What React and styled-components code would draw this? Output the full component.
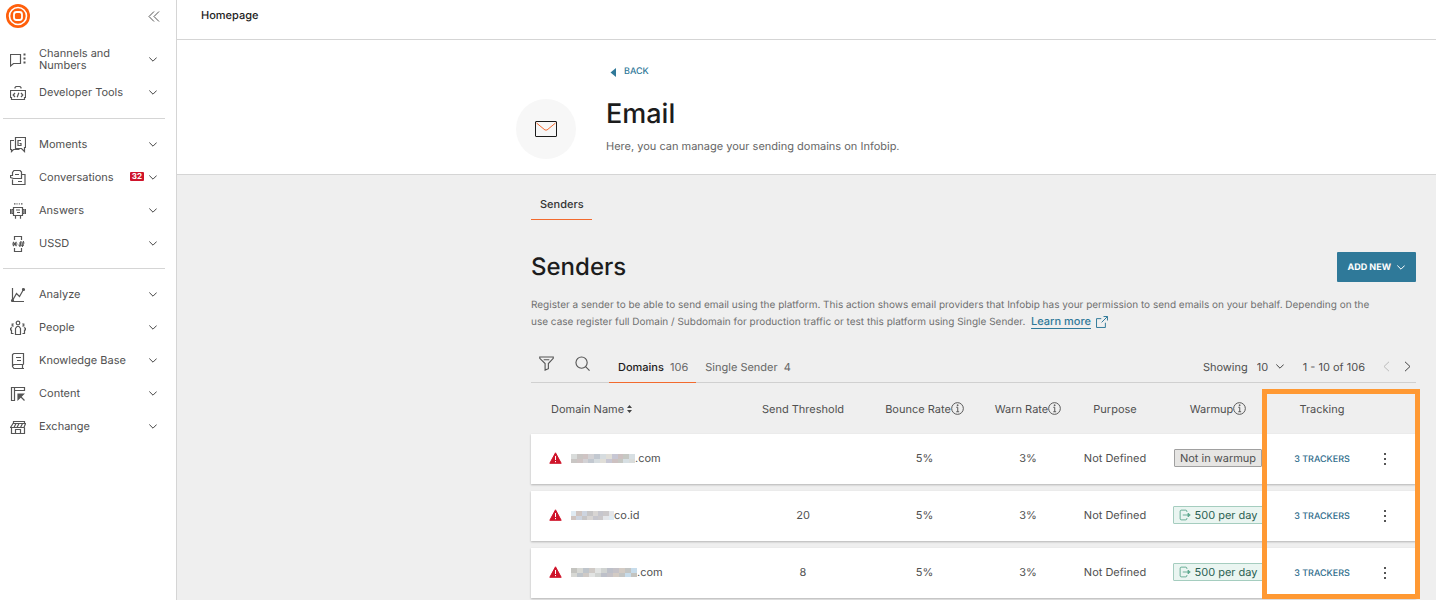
import React from "react";
import styled, { createGlobalStyle } from "styled-components";

const GlobalStyle = createGlobalStyle`
  * {
    box-sizing: border-box;
  }
  body {
    margin: 0;
    background: #efefef;
    color: #505050;
    font-family: Inter, "Liberation Sans", sans-serif;
    font-size: 11px;
    line-height: 16px;
    text-rendering: geometricPrecision;
  }
  button,
  select {
    font-family: inherit;
    font-size: inherit;
    font-weight: inherit;
    color: inherit;
    text-rendering: inherit;
    background: none;
    border: 0;
    padding: 0;
    margin: 0;
    cursor: pointer;
  }
  h1,
  h2,
  p {
    margin: 0;
  }
  svg {
    display: block;
    flex: none;
  }
`;

const Page = styled.div`
  display: flex;
  min-height: 100vh;
`;

/* sidebar */
const Sidebar = styled.aside`
  flex: none;
  width: 177px;
  background: #fff;
  border-right: 1px solid #d5d5d5;
`;
const SidebarTop = styled.div`
  display: flex;
  align-items: center;
  justify-content: space-between;
  height: 32px;
  margin-bottom: 10px;
  padding: 0 16px 0 6px;
`;
const NavGroup = styled.nav`
  display: flex;
  flex-direction: column;
  & + & {
    margin-top: 10px;
  }
  & + & + & {
    margin-top: 9px;
  }
  & + &::before {
    content: "";
    height: 1px;
    margin: 0 11px 8px 3px;
    background: #d5d5d5;
  }
`;
const NavItem = styled.button`
  display: flex;
  align-items: center;
  height: 33px;
  padding: 0 19px 0 10px;
  text-align: left;
  line-height: 12px;
  svg {
    margin-top: 2px;
  }
`;
const NavLabel = styled.span`
  flex: 1;
  margin-left: 13px;
  padding-right: ${(props) => (props.$wrap ? "24px" : "0")};
`;
const Count = styled.span`
  margin-right: 5px;
  padding: 0 2px;
  border-radius: 1px;
  background: #cf142b;
  color: #fff;
  font-size: 8px;
  font-weight: 700;
  line-height: 9px;
`;

/* main area */
const Main = styled.main`
  flex: 1;
  min-width: 0;
`;
const TopBar = styled.header`
  height: 40px;
  padding: 7px 24px;
  background: #fff;
  border-bottom: 1px solid #d5d5d5;
  color: #1c1c1c;
  font-weight: 500;
`;
const Hero = styled.section`
  display: flex;
  gap: 30px;
  height: 135px;
  padding: 24px 20px 0 339px;
  background: #fff;
  border-bottom: 1px solid #d5d5d5;
`;
const HeroIcon = styled.div`
  display: flex;
  align-items: center;
  justify-content: center;
  width: 60px;
  height: 60px;
  margin-top: 35px;
  border-radius: 50%;
  background: #f7f7f7;
`;
const BackLink = styled.a`
  display: flex;
  align-items: center;
  gap: 8px;
  padding-left: 4px;
  color: #2f7999;
  font-size: 9px;
  font-weight: 500;
  text-decoration: none;
`;
const Title = styled.h1`
  margin: 17px 0 7px;
  color: #1c1c1c;
  font-size: 27px;
  font-weight: 500;
  line-height: 34px;
`;
const Muted = styled.p`
  color: #666;
`;
const Content = styled.section`
  padding: 17px 20px 0 354px;
`;
const PageTab = styled.button`
  height: 28px;
  padding: 0 8px 4px 9px;
  border-bottom: 1px solid #f26a2e;
  color: #333;
  font-weight: 500;
`;
const SectionHead = styled.div`
  display: flex;
  align-items: center;
  justify-content: space-between;
  margin: 32px 0 15px;
`;
const SectionTitle = styled.h2`
  color: #1c1c1c;
  font-size: 24px;
  font-weight: 500;
  line-height: 30px;
`;
const AddButton = styled.button`
  display: flex;
  align-items: center;
  gap: 6px;
  height: 30px;
  padding: 0 11px 0 10px;
  border-radius: 1px;
  background: #2f7999;
  color: #fff;
  font-size: 9px;
  font-weight: 700;
`;
const Description = styled.p`
  color: #707070;
  font-size: 10px;
`;
const LearnMore = styled.a`
  margin-left: 3px;
  color: #2f7999;
  font-size: 11px;
  font-weight: 500;
  text-decoration: underline;
  text-underline-offset: 3px;
  svg {
    display: inline-block;
    margin-left: 5px;
    vertical-align: -3px;
  }
`;

/* toolbar above the table */
const Toolbar = styled.div`
  display: flex;
  align-items: stretch;
  height: 32px;
  margin-top: 21px;
  border-bottom: 1px solid #d0d0d0;
`;
const Tools = styled.div`
  display: flex;
  align-items: center;
  gap: 16px;
  padding: 0 17px 6px 5px;
`;
const ToolButton = styled.button`
  display: flex;
  justify-content: center;
  width: 20px;
`;
const ListTab = styled.button`
  margin-bottom: -1px;
  padding: 0 8px 0 9px;
  border-bottom: 1px solid ${(props) => (props.$active ? "#f26a2e" : "transparent")};
  color: #666;
  strong {
    margin-right: 3px;
    color: ${(props) => (props.$active ? "#1c1c1c" : "inherit")};
    font-weight: ${(props) => (props.$active ? 500 : "inherit")};
  }
`;
const Pager = styled.div`
  display: flex;
  align-items: center;
  margin-left: auto;
  padding-right: 5px;
`;
const SelectBox = styled.label`
  display: flex;
  align-items: center;
  gap: 9px;
  margin-right: 19px;
`;
const PageSize = styled.select`
  appearance: none;
  width: 28px;
  height: 16px;
  margin-right: -18px;
  outline: none;
`;
const PagerButton = styled.button`
  margin-left: ${(props) => (props.$prev ? "18px" : "14px")};
  color: ${(props) => (props.$prev ? "#bbb" : "#444")};
`;

/* domain table */
const TableWrap = styled.div`
  display: flow-root;
  position: relative;
`;
const Table = styled.table`
  width: 100%;
  margin-bottom: -7px;
  table-layout: fixed;
  border-collapse: separate;
  border-spacing: 0 7px;
`;
const Col = styled.col`
  width: ${(props) => props.$width || "auto"};
`;
const HeadCell = styled.th`
  height: 37px;
  padding: 0;
  padding-left: ${(props) => (props.$left ? "20px" : "0")};
  font-weight: 400;
  text-align: left;
`;
const Row = styled.tr`
  background: #fff;
  box-shadow: 0 1px 2px rgba(0, 0, 0, 0.25);
`;
const Cell = styled.td`
  height: 50px;
  padding: 0 0 2px;
`;
const Center = styled.div`
  display: flex;
  align-items: center;
  justify-content: ${(props) => (props.$left ? "flex-start" : "center")};
  gap: ${(props) => (props.$gap ? "3px" : "0")};
`;
const MenuCell = styled(Cell)`
  padding: 0 12px 0 0;
`;
const DomainName = styled.div`
  display: flex;
  align-items: center;
  gap: 9px;
  padding-left: 18px;
`;
const Masked = styled.span`
  display: flex;
  align-items: center;
`;
const Tag = styled.span`
  display: inline-flex;
  align-items: center;
  gap: 4px;
  height: 18px;
  padding: 0 5px;
  border: 1px solid ${(props) => (props.$green ? "#a5cdbf" : "#a0a0a0")};
  border-radius: 1px;
  background: ${(props) => (props.$green ? "#eaf5f1" : "#e6e5e3")};
  color: ${(props) => (props.$green ? "#2b6152" : "#505050")};
`;
const TrackerButton = styled.button`
  padding-top: 2px;
  color: #2f6d8c;
  font-size: 9px;
  font-weight: 500;
`;
const Highlight = styled.div`
  position: absolute;
  top: 6px;
  right: -4px;
  bottom: -1px;
  width: 158px;
  border: 5px solid #ff9933;
  pointer-events: none;
`;

/* icons */
const Icon = ({ size = 16, children, ...rest }) => (
  <svg
    width={size}
    height={size}
    viewBox="0 0 16 16"
    fill="none"
    stroke="#555"
    strokeWidth="1.2"
    aria-hidden="true"
    {...rest}
  >
    {children}
  </svg>
);

const Chevron = ({ color = "#444" }) => (
  <svg width="8" height="5" viewBox="0 0 8 5" fill="none" stroke={color} aria-hidden="true">
    <path d="M.3.5 4 4.2 7.7.5" />
  </svg>
);

const icons = {
  channels: (
    <>
      <path d="M.5 2.5h10v9h-7l-3 2.500z" />
      <path d="M13.500 2.500h2M13.500 6.500h2M13.500 10.500h2" strokeWidth="2" />
    </>
  ),
  tools: (
    <>
      <path d="M.5 5.500h15v7h-1v2h-13v-2h-1zM5 3.500v-1l1-1h4l1 1v1" />
      <path d="M5 8 3.200 10 5 12M11 8l1.800 2L11 12M8.800 7.800 7.200 12.200" />
    </>
  ),
  moments: (
    <path d="M4 3.500H.5v9h1v2l2-2h6M5.500.5h10v10h-1v4l-3-3h-6zM11 3.500H8v5h3v-2H9.500" />
  ),
  conversations: (
    <path d="M.5 5.500h2v-3l1.500-2h6l1.500 1.500v6.500h-8l-3-1zM5 4.500h4M2.500 9.500v5h12.500v-10h-3.500M8 11.500h4" />
  ),
  answers: (
    <path d="M3.500 4.500h9v8h-9zM.5 6v5M3.500 6.500h-1.500v4h1.500M15.500 6v5M12.500 6.500h1.500v4h-1.500M4 .8h1.500M6.500 .8h1M8.800 .8h1M11 .8h1.500M5.500 12.500v3.200M10.500 12.500v3.200M6 7h4M7 9.500h3" />
  ),
  ussd: (
    <path d="M4.500 4V.5h7V4M4.500 12v3.500h7V12M2 8h5.500M3 5.800l3.500 4.400M6.500 5.800 3 10.200M9 7h5.500M8.500 9.200h5.500M11 5 9.800 11M13.500 5l-1.200 6" />
  ),
  analyze: (
    <>
      <path d="M2.500 1v13.500H14M2.500 13.500l4-7 3 3 4-7" />
      <circle cx="13.500" cy="2.500" r="1" fill="#555" />
      <circle cx="2.500" cy="13.500" r="1" fill="#555" />
    </>
  ),
  people: (
    <>
      <circle cx="8" cy="3" r="1.800" />
      <path d="M5.500 14.500V8.500L7 6.500h2l1.500 2v6zM3.800 4h-1.600v2h1.600M12.200 4h1.600v2h-1.600M3.500 13.500h-2v-3.500h-1V8.500L2 7.500M12.500 13.500h2v-3.500h1V8.500L14 7.500" />
    </>
  ),
  knowledge: (
    <path d="M13.500 11.500v-11h-9.500l-1.500 1v12l1.500 2h10M13.500 11.500H4l-1.500 1.200M12.500 11.500v4M6 4.500h5M7 7.500h4" />
  ),
  content: (
    <>
      <path d="M1.500 1.500h3v13h-3zM4.500 4.500v-3h10v3zM14.500 14.500l-4-4" />
      <path d="M8 8h5.500L8 13.500z" fill="#555" />
    </>
  ),
  exchange: (
    <path d="M3.500 4.500v-2h11v2M3 4.500h12.500L14 8.500H.5zM6 4.500l-2 4M9 4.500l-2 4M12.500 4.500l-2 4M1.500 8.500v6h13v-6M5.500 14.500v-4h5v4" />
  ),
};

const navGroups = [
  [
    { label: "Channels and Numbers", icon: "channels", wrap: true },
    { label: "Developer Tools", icon: "tools" },
  ],
  [
    { label: "Moments", icon: "moments" },
    { label: "Conversations", icon: "conversations", count: 32 },
    { label: "Answers", icon: "answers" },
    { label: "USSD", icon: "ussd" },
  ],
  [
    { label: "Analyze", icon: "analyze" },
    { label: "People", icon: "people" },
    { label: "Knowledge Base", icon: "knowledge" },
    { label: "Content", icon: "content" },
    { label: "Exchange", icon: "exchange" },
  ],
];

// the start of each domain is masked: one list of colours per mosaic
const domains = [
  {
    mask: ["#d9dcdb", "#c9c6c4", "#cfc4c4", "#d3d2d5", "#c2c8d0", "#d6dcdf", "#e0ded8", "#c7c7d4", "#cdc1c1", "#c6c8c3", "#d7dfe3"],
    maskWidth: 64,
    suffix: ".com",
    threshold: "",
  },
  {
    mask: ["#dfeaf2", "#cfc4c0", "#cdd4df", "#c6c5c6", "#d8d5d3", "#c6c6cd", "#cbc8ca", "#e4e6ea"],
    maskWidth: 43,
    suffix: "co.id",
    threshold: "20",
    warmup: "500 per day",
  },
  {
    mask: ["#c4c4c0", "#d7d8d4", "#bfc5cb", "#cfcac6", "#e1e3e2", "#d0d3d1", "#bdc0c9", "#c5c2c7", "#d3cbc4", "#c3c5c4", "#c7dceb"],
    maskWidth: 66,
    suffix: ".com",
    threshold: "8",
    warmup: "500 per day",
  },
];

const Mosaic = ({ colors, width }) => (
  <svg
    width={width}
    height="9"
    viewBox={`0 0 ${colors.length * 2} 2`}
    preserveAspectRatio="none"
    shapeRendering="crispEdges"
    aria-hidden="true"
  >
    {colors.map((color, i) => (
      <g key={i}>
        <rect x={i * 2} y="0" width="2" height="1" fill={color} />
        <rect x={i * 2} y="1" width="2" height="1" fill={colors[(i + 1) % colors.length]} />
      </g>
    ))}
  </svg>
);

const InfoIcon = () => (
  <Icon size={13}>
    <circle cx="8" cy="8" r="7.200" />
    <path d="M6.500 6.500H8.300V12M6.500 12h3.500M7.700 3.500h1v1h-1z" />
  </Icon>
);

const WarningIcon = () => (
  <svg width="13" height="12" viewBox="0 0 13 12" aria-hidden="true">
    <path d="M6.500.8 12.200 11.300H.8z" fill="#cf142b" stroke="#cf142b" strokeLinejoin="round" />
    <path d="M6.500 4v4M6.500 9v1.200" stroke="#fff" />
  </svg>
);

const Sender = ({ domain }) => (
  <Row>
    <Cell>
      <DomainName>
        <WarningIcon />
        <Masked>
          <Mosaic colors={domain.mask} width={domain.maskWidth} />
          {domain.suffix}
        </Masked>
      </DomainName>
    </Cell>
    <Cell>
      <Center>{domain.threshold}</Center>
    </Cell>
    <Cell>
      <Center>5%</Center>
    </Cell>
    <Cell>
      <Center>3%</Center>
    </Cell>
    <Cell>
      <Center>Not Defined</Center>
    </Cell>
    <Cell>
      <Center>
        {domain.warmup ? (
          <Tag $green>
            <Icon size={12} stroke="#5fa88f">
              <path d="M10.500 4V2.500l-1-1h-7l-1 1v11l1 1h7l1-1V12M5 8h8" />
              <path d="m12 5.500 3 2.500-3 2.500z" fill="#5fa88f" />
            </Icon>
            {domain.warmup}
          </Tag>
        ) : (
          <Tag>Not in warmup</Tag>
        )}
      </Center>
    </Cell>
    <Cell>
      <Center>
        <TrackerButton>3 TRACKERS</TrackerButton>
      </Center>
    </Cell>
    <MenuCell>
      <Center>
        <button aria-label="More actions">
          <svg width="10" height="14" viewBox="0 0 10 14" fill="#555" aria-hidden="true">
            <path d="M4 1h2v2H4zM4 6h2v2H4zM4 11h2v2H4z" />
          </svg>
        </button>
      </Center>
    </MenuCell>
  </Row>
);

const App = () => (
  <>
    <GlobalStyle />
    <Page>
      <Sidebar>
        <SidebarTop>
          <svg width="24" height="24" viewBox="0 0 24 24" fill="none" aria-hidden="true">
            <circle cx="12" cy="12" r="12" fill="#ff5f0b" />
            <circle cx="12" cy="12" r="8.500" stroke="#fff" strokeWidth="1.600" />
            <rect x="8" y="8" width="8" height="8" rx="2.500" stroke="#fff" strokeWidth="1.800" />
          </svg>
          <button aria-label="Collapse menu">
            <svg width="12" height="11" viewBox="0 0 12 11" fill="none" stroke="#555" aria-hidden="true">
              <path d="M6 .5 1 5.500l5 5M11 .5 6 5.500l5 5" />
            </svg>
          </button>
        </SidebarTop>
        {navGroups.map((group, i) => (
          <NavGroup key={i}>
            {group.map((item) => (
              <NavItem key={item.label}>
                <Icon>{icons[item.icon]}</Icon>
                <NavLabel $wrap={item.wrap}>{item.label}</NavLabel>
                {item.count && <Count>{item.count}</Count>}
                <Chevron />
              </NavItem>
            ))}
          </NavGroup>
        ))}
      </Sidebar>
      <Main>
        <TopBar>Homepage</TopBar>
        <Hero>
          <HeroIcon>
            <svg width="22" height="16" viewBox="0 0 22 16" fill="none" aria-hidden="true">
              <rect x=".5" y=".5" width="21" height="15" rx=".5" stroke="#1c1c1c" />
              <path d="m1.500 2 8.500 7h2l8.500-7" stroke="#f26a2e" />
            </svg>
          </HeroIcon>
          <div>
            <BackLink href="#">
              <svg width="6" height="9" viewBox="0 0 6 9" fill="#2f7999" aria-hidden="true">
                <path d="M6 0v9L.5 4.500z" />
              </svg>
              BACK
            </BackLink>
            <Title>Email</Title>
            <Muted>Here, you can manage your sending domains on Infobip.</Muted>
          </div>
        </Hero>
        <Content>
          <PageTab>Senders</PageTab>
          <SectionHead>
            <SectionTitle>Senders</SectionTitle>
            <AddButton>
              ADD NEW
              <Chevron color="#fff" />
            </AddButton>
          </SectionHead>
          <Description>
            Register a sender to be able to send email using the platform. This action shows email
            providers that Infobip has your permission to send emails on your behalf. Depending on
            the
            <br />
            use case register full Domain / Subdomain for production traffic or test this platform
            using Single Sender.{" "}
            <LearnMore href="#">
              Learn more
              <Icon size={12} stroke="#2f7999" strokeWidth="1.300">
                <path d="M7 3.500H.7v11.800h11.800V9M10 .7h5.300V6M15.300.7 7.500 8.500" />
              </Icon>
            </LearnMore>
          </Description>
          <Toolbar>
            <Tools>
              <ToolButton aria-label="Filter">
                <Icon size={15}>
                  <path d="M.8 1h14.400v1.500L10 8v5.500L6.500 15V8L.8 2.500zM5 4h6" />
                </Icon>
              </ToolButton>
              <ToolButton aria-label="Search">
                <Icon size={15}>
                  <circle cx="7" cy="7" r="6" />
                  <path d="m11.300 11.300 4.200 4.200" />
                </Icon>
              </ToolButton>
            </Tools>
            <ListTab $active>
              <strong>Domains</strong> 106
            </ListTab>
            <ListTab>
              <strong>Single Sender</strong> 4
            </ListTab>
            <Pager>
              <SelectBox>
                Showing
                <PageSize defaultValue="10">
                  <option>10</option>
                  <option>20</option>
                  <option>50</option>
                </PageSize>
                <Chevron />
              </SelectBox>
              1 - 10 of 106
              <PagerButton $prev aria-label="Previous page">
                <svg width="7" height="11" viewBox="0 0 7 11" fill="none" stroke="currentColor">
                  <path d="M6 .8 1 5.500l5 4.700" />
                </svg>
              </PagerButton>
              <PagerButton aria-label="Next page">
                <svg width="7" height="11" viewBox="0 0 7 11" fill="none" stroke="currentColor">
                  <path d="m1 .8 5 4.700-5 4.700" />
                </svg>
              </PagerButton>
            </Pager>
          </Toolbar>
          <TableWrap>
            <Table>
              <colgroup>
                <Col />
                <Col $width="126px" />
                <Col $width="117px" />
                <Col $width="90px" />
                <Col $width="84px" />
                <Col $width="122px" />
                <Col $width="86px" />
                <Col $width="51px" />
              </colgroup>
              <thead>
                <tr>
                  <HeadCell $left>
                    <Center $left $gap>
                      Domain Name
                      <svg width="5" height="8" viewBox="0 0 5 8" fill="#444" aria-hidden="true">
                        <path d="M0 3h5L2.500 0zM0 5h5L2.500 8z" />
                      </svg>
                    </Center>
                  </HeadCell>
                  <HeadCell>
                    <Center>Send Threshold</Center>
                  </HeadCell>
                  <HeadCell>
                    <Center>
                      Bounce Rate
                      <InfoIcon />
                    </Center>
                  </HeadCell>
                  <HeadCell>
                    <Center>
                      Warn Rate
                      <InfoIcon />
                    </Center>
                  </HeadCell>
                  <HeadCell>
                    <Center>Purpose</Center>
                  </HeadCell>
                  <HeadCell>
                    <Center>
                      Warmup
                      <InfoIcon />
                    </Center>
                  </HeadCell>
                  <HeadCell>
                    <Center>Tracking</Center>
                  </HeadCell>
                  <HeadCell />
                </tr>
              </thead>
              <tbody>
                {domains.map((domain, i) => (
                  <Sender key={i} domain={domain} />
                ))}
              </tbody>
            </Table>
            <Highlight />
          </TableWrap>
        </Content>
      </Main>
    </Page>
  </>
);

export default App;
